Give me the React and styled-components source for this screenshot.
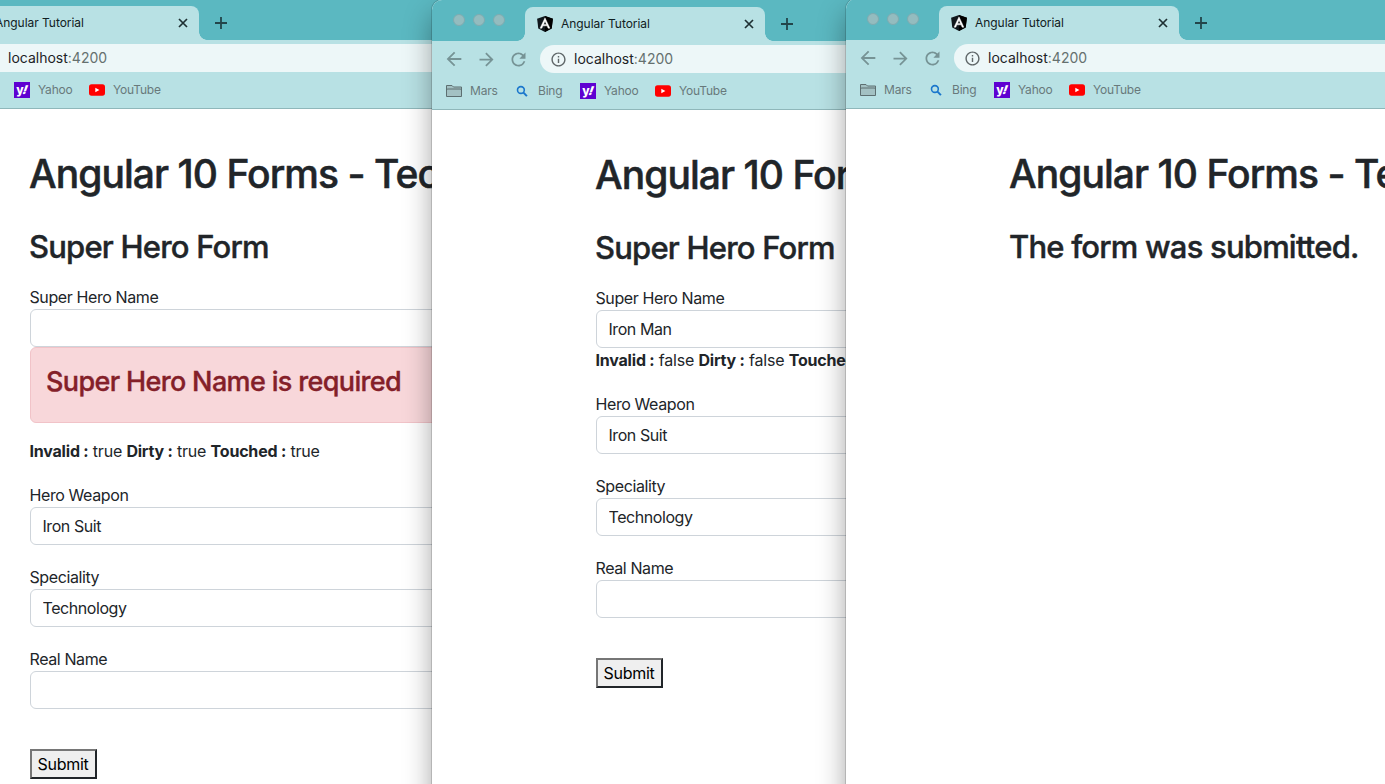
import React from "react";
import styled, { createGlobalStyle } from "styled-components";
import { MdArrowBack, MdArrowForward, MdRefresh, MdInfoOutline } from "react-icons/md";

const GlobalStyle = createGlobalStyle`
  * { box-sizing: border-box; }
  html, body { margin: 0; padding: 0; overflow: hidden; }
  body { font-family: Inter, "Liberation Sans", sans-serif; color: #212529; background: #fff; }
`;

const Desktop = styled.main`
  position: relative;
  width: 1385px;
  height: 784px;
  overflow: hidden;
  background: #5bb8c1;
`;

const Window = styled.section`
  position: absolute;
  left: ${(p) => p.$x}px;
  top: ${(p) => p.$y}px;
  width: 1100px;
  height: 860px;
  overflow: hidden;
  border-radius: 10px;
  background: #fff;
`;

const WindowShadow = styled.div`
  position: absolute;
  left: ${(p) => p.$x}px;
  top: ${(p) => p.$y}px;
  width: 1100px;
  height: 860px;
  border-radius: 10px;
  box-shadow: 0 0 0 1px rgba(0, 0, 0, 0.14), 0 14px 28px rgba(0, 0, 0, 0.36);
`;

const TabStrip = styled.header`
  display: flex;
  align-items: flex-end;
  height: 41px;
  padding-left: 21px;
  background: #5bb8c1;
`;

const Lights = styled.div`
  display: flex;
  gap: 8px;
  width: 72px;
  padding-bottom: 15px;
`;

const Light = styled.i`
  width: 12px;
  height: 12px;
  border-radius: 50%;
  background: #94bcbf;
  border: 1px solid #80abb0;
`;

const Tab = styled.div`
  position: relative;
  display: flex;
  align-items: center;
  width: 240px;
  height: 34px;
  padding: 0 11px 0 12px;
  border-radius: 8px 8px 0 0;
  background: #b8e1e4;
  &::before, &::after {
    content: "";
    position: absolute;
    bottom: 0;
    width: 8px;
    height: 8px;
  }
  &::before { left: -8px; background: radial-gradient(circle at 0 0, #5bb8c1 7.5px, #b8e1e4 8px); }
  &::after { right: -8px; background: radial-gradient(circle at 100% 0, #5bb8c1 7.5px, #b8e1e4 8px); }
`;

const TabTitle = styled.span`
  flex: 1;
  margin-left: 8px;
  font-size: 12px;
  line-height: 16px;
  letter-spacing: -0.04px;
  color: #102022;
`;

const NewTab = styled.div`
  display: flex;
  align-items: center;
  height: 34px;
  margin-left: 16px;
`;

const Toolbar = styled.div`
  display: flex;
  align-items: center;
  height: 36px;
  padding: 0 0 0 11px;
  background: #b8e1e4;
`;

const NavIcons = styled.div`
  display: flex;
  align-items: center;
  gap: 11px;
  width: 97px;
  color: #769395;
`;

const Omnibox = styled.div`
  display: flex;
  flex: 1;
  align-items: center;
  height: 28px;
  padding-left: 10px;
  border-radius: 14px 0 0 14px;
  background: #edf7f8;
  color: #5f6668;
`;

const Url = styled.span`
  margin-left: 7px;
  font-size: 14px;
  line-height: 20px;
  color: #65706f;
  b { font-weight: 400; color: #1d2325; }
`;

const Bookmarks = styled.nav`
  display: flex;
  align-items: center;
  height: 33px;
  padding: 0 0 5px 14px;
  border-bottom: 1px solid #8fb7ba;
  background: #b8e1e4;
`;

const Bookmark = styled.span`
  display: flex;
  align-items: center;
  gap: 8px;
  width: ${(p) => p.$w}px;
  font-size: 12px;
  line-height: 16px;
  letter-spacing: -0.2px;
  color: #68797b;
  white-space: nowrap;
`;

const YahooMark = styled.i`
  display: flex;
  align-items: center;
  justify-content: center;
  width: 16px;
  height: 16px;
  background: #5f01d1;
  color: #fff;
  font: normal 800 12px/14px Inter, sans-serif;
  em { font-weight: 900; font-style: normal; transform: skewX(-20deg); }
`;

const Page = styled.div`
  padding: 41px 0 0 164px;
  white-space: nowrap;
`;

const Title = styled.h1`
  margin: 0 0 30px -1px;
  font-size: 39px;
  font-weight: 500;
  line-height: 48px;
  letter-spacing: -0.95px;
  -webkit-text-stroke: 0.5px currentColor;
`;

const Subtitle = styled.h2`
  margin: 0 0 19px -1px;
  font-size: 31px;
  font-weight: 500;
  line-height: 38px;
  letter-spacing: -0.8px;
  -webkit-text-stroke: 0.4px currentColor;
`;

const Field = styled.div`
  margin-bottom: ${(p) => p.$gap ?? 20}px;
`;

const Label = styled.label`
  display: block;
  margin-left: -0.5px;
  font-size: 16px;
  line-height: 24px;
  letter-spacing: -0.4px;
`;

const Input = styled.input`
  display: block;
  width: 772px;
  height: 38px;
  padding: 6px 11.5px;
  border: 1px solid #ced4da;
  border-radius: 6px;
  background: #fff;
  color: #212529;
  font: 400 16px/24px Inter, sans-serif;
  letter-spacing: -0.43px;
`;

const Alert = styled.div`
  width: 772px;
  height: 76px;
  margin-bottom: 16px;
  padding: 17px 15px 15px;
  border: 1px solid #f1c3c8;
  border-radius: 6px;
  background: #f8d7da;
  color: #842029;
  font-size: 27px;
  font-weight: 500;
  line-height: 34px;
  letter-spacing: -0.65px;
  -webkit-text-stroke: 0.35px currentColor;
`;

const State = styled.div`
  margin: 0 0 20px -0.5px;
  font-size: 16px;
  line-height: 24px;
  letter-spacing: -0.2px;
  b { font-weight: 700; }
`;

const Submit = styled.button`
  display: block;
  width: 67px;
  height: 30px;
  margin-top: 40px;
  padding: 0 1px 0 0;
  border: 2px solid;
  border-color: #767676 #212529 #212529 #767676;
  border-radius: 0;
  background: #efefef;
  color: #000;
  font: 400 16px/24px Inter, sans-serif;
  letter-spacing: -0.3px;
`;

const AngularIcon = () => (
  <svg width="16" height="16" viewBox="31 29 188 202" preserveAspectRatio="none">
    <path d="M125 30 31.9 63.2l14.2 123.1L125 230l78.9-43.7 14.2-123.1z" fill="#10171c" />
    <path d="M125 30v200l78.9-43.7 14.2-123.1z" fill="#000" />
    <path d="M125 52.1 66.8 182.6h21.7l11.7-29.2h49.4l11.7 29.2H183zm17 83.3h-34l17-40.9z" fill="#fff" stroke="#fff" strokeWidth="5" />
  </svg>
);

const CloseIcon = () => (
  <svg width="10" height="10" viewBox="0 0 10 10" stroke="#1e3033" strokeWidth="1.7">
    <path d="M1 1l8 8M9 1l-8 8" />
  </svg>
);

const PlusIcon = () => (
  <svg width="12" height="12" viewBox="0 0 12 12" stroke="#22454a" strokeWidth="1.8">
    <path d="M6 0v12M0 6h12" />
  </svg>
);

const FolderIcon = () => (
  <svg width="16" height="14" viewBox="0 0 16 14" fill="#a3c1c3" stroke="#5d6f71">
    <path d="M.5 12.500V1.500h5.500l1.500 1.500h8v9.500z" />
    <path d="M.5 6.500q0-1.500 1.200-1.500h12.600q1.200 0 1.200 1.500" fill="none" />
  </svg>
);

const SearchIcon = () => (
  <svg width="16" height="16" viewBox="0 0 16 16" fill="none" stroke="#1a76cc">
    <circle cx="6.900" cy="7" r="3.400" strokeWidth="1.600" />
    <path d="M9.500 9.600l3.400 3.500" strokeWidth="2" />
  </svg>
);

const YouTubeIcon = () => (
  <svg width="16" height="12" viewBox="0 0 16 12">
    <rect y="0.300" width="16" height="11.400" rx="2.600" fill="#f00" />
    <path d="M6.300 3.700v4.600L10.400 6z" fill="#fff" />
  </svg>
);

function Browser({ x, y, children }) {
  return (
    <>
      <WindowShadow $x={x} $y={y} />
      <Window $x={x} $y={y}>
        <TabStrip>
          <Lights><Light /><Light /><Light /></Lights>
          <Tab><AngularIcon /><TabTitle>Angular Tutorial</TabTitle><CloseIcon /></Tab>
          <NewTab><PlusIcon /></NewTab>
        </TabStrip>
        <Toolbar>
          <NavIcons><MdArrowBack size={22} /><MdArrowForward size={21} /><MdRefresh size={21} /></NavIcons>
          <Omnibox><MdInfoOutline size={17} /><Url><b>localhost</b>:4200</Url></Omnibox>
        </Toolbar>
        <Bookmarks>
          <Bookmark $w={68}><FolderIcon />Mars</Bookmark>
          <Bookmark $w={66}><SearchIcon />Bing</Bookmark>
          <Bookmark $w={75}><YahooMark>y<em>!</em></YahooMark>Yahoo</Bookmark>
          <Bookmark $w={90}><YouTubeIcon />YouTube</Bookmark>
        </Bookmarks>
        <Page>
          <Title>Angular 10 Forms - Tec</Title>
          {children}
        </Page>
      </Window>
    </>
  );
}

function HeroForm({ name, error, state }) {
  return (
    <>
      <Subtitle>Super Hero Form</Subtitle>
      <Field $gap={0}>
        <Label>Super Hero Name</Label>
        <Input defaultValue={name} />
      </Field>
      {error && <Alert>{error}</Alert>}
      <State>
        <b>Invalid :</b> {state} <b>Dirty :</b> {state} <b>Touched :</b> {state}
      </State>
      <Field><Label>Hero Weapon</Label><Input defaultValue="Iron Suit" /></Field>
      <Field><Label>Speciality</Label><Input defaultValue="Technology" /></Field>
      <Field><Label>Real Name</Label><Input /></Field>
      <Submit>Submit</Submit>
    </>
  );
}

export default function App() {
  return (
    <>
      <GlobalStyle />
      <Desktop>
        <Browser x={-134} y={-1}>
          <HeroForm name="" error="Super Hero Name is required" state="true" />
        </Browser>
        <Browser x={432} y={0}>
          <HeroForm name="Iron Man" state="false" />
        </Browser>
        <Browser x={846} y={-1}>
          <Subtitle>The form was submitted.</Subtitle>
        </Browser>
      </Desktop>
    </>
  );
}
